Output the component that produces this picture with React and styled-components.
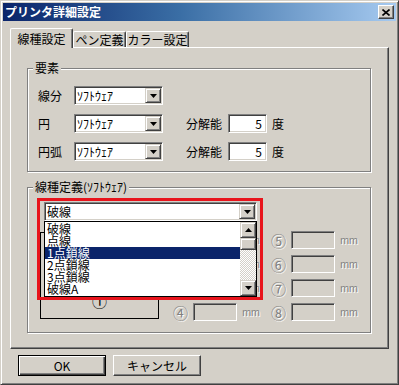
import React from 'react'
import styled, { createGlobalStyle, css } from 'styled-components'

const GlobalStyle = createGlobalStyle`
  html, body {
    margin: 0;
    padding: 0;
    background: #d4d0c8;
  }
  body {
    font-family: "Noto Sans CJK JP", "Noto Sans", sans-serif;
    font-size: 12px;
    color: #000;
  }
`

const raised = css`
  border: 1px solid;
  border-color: #fff #404040 #404040 #fff;
  box-shadow: inset -1px -1px 0 #808080;
`

const sunken = css`
  border: 1px solid;
  border-color: #808080 #fff #fff #808080;
  box-shadow: inset 1px 1px 0 #404040, inset -1px -1px 0 #d4d0c8;
`

const Window = styled.div`
  box-sizing: border-box;
  width: 399px;
  height: 385px;
  background: #d4d0c8;
  border: 1px solid;
  border-color: #d4d0c8 #404040 #404040 #d4d0c8;
  box-shadow: inset 1px 1px 0 #fff, inset -1px -1px 0 #808080;
  padding: 2px;
  display: flex;
  flex-direction: column;
`

const TitleBar = styled.div`
  height: 18px;
  display: flex;
  align-items: center;
  justify-content: space-between;
  padding: 0 2px 0 2px;
  background: linear-gradient(90deg, #0a246a 0%, #3a6ea5 45%, #a6caf0 100%);
  color: #fff;
  font-weight: bold;
  font-size: 12px;
  line-height: 1;
`

const CloseButton = styled.div`
  box-sizing: border-box;
  width: 16px;
  height: 14px;
  background: #d4d0c8;
  ${raised}
  display: flex;
  align-items: center;
  justify-content: center;
`

const Body = styled.div`
  padding: 7px 7px 0 7px;
  display: flex;
  flex-direction: column;
`

const TabStrip = styled.div`
  display: flex;
  align-items: flex-end;
  height: 20px;
  margin-bottom: -1px;
  position: relative;
  z-index: 1;
`

const Tab = styled.div`
  box-sizing: border-box;
  width: ${p => p.$w}px;
  height: ${p => (p.$active ? 20 : 16)}px;
  margin-bottom: ${p => (p.$active ? 0 : 1)}px;
  background: #d4d0c8;
  border-top: 1px solid #fff;
  border-left: 1px solid #fff;
  border-right: 1px solid #404040;
  box-shadow: inset -1px 0 0 #808080;
  border-radius: 2px 2px 0 0;
  display: flex;
  align-items: center;
  justify-content: center;
  line-height: 1;
  white-space: nowrap;
`

const Panel = styled.div`
  box-sizing: border-box;
  height: 302px;
  ${raised}
  padding: 20px 0 0 16px;
  display: flex;
  flex-direction: column;
`

const Group = styled.div`
  box-sizing: border-box;
  position: relative;
  width: 344px;
  height: ${p => p.$h}px;
  margin-top: ${p => p.$mt || 0}px;
  border: 1px solid #808080;
  box-shadow: inset 1px 1px 0 #fff, 1px 1px 0 #fff;
  padding: ${p => p.$pt}px 0 0 ${p => p.$pl}px;
  display: flex;
  flex-direction: column;
`

const Legend = styled.span`
  position: absolute;
  top: -8px;
  left: 5px;
  padding: 0 2px;
  line-height: 14px;
  background: #d4d0c8;
  white-space: nowrap;
`

const Rows = styled.div`
  display: flex;
  flex-direction: column;
  gap: 9px;
`

const Row = styled.div`
  display: flex;
  align-items: center;
  height: 19px;
`

const RowLabel = styled.span`
  width: 36px;
`

const Combo = styled.div`
  box-sizing: border-box;
  width: ${p => p.$w}px;
  height: 19px;
  margin-left: ${p => p.$ml || 0}px;
  padding: 1px;
  background: #fff;
  ${sunken}
  display: flex;
`

const ComboText = styled.span`
  flex: 1;
  padding-left: 1px;
  display: flex;
  align-items: center;
  white-space: nowrap;
  overflow: hidden;
  line-height: 1;
`

const ArrowButton = styled.span`
  box-sizing: border-box;
  width: 16px;
  height: ${p => p.$h || 15}px;
  flex: none;
  background: #d4d0c8;
  border: 1px solid;
  border-color: #d4d0c8 #404040 #404040 #d4d0c8;
  box-shadow: inset 1px 1px 0 #fff, inset -1px -1px 0 #808080;
  display: flex;
  align-items: center;
  justify-content: center;
`

const ResLabel = styled.span`
  margin-left: 23px;
  width: 42px;
`

const Edit = styled.div`
  box-sizing: border-box;
  width: 39px;
  height: 19px;
  background: #fff;
  ${sunken}
  display: flex;
  align-items: center;
  justify-content: flex-end;
  padding-right: 4px;
  line-height: 1;
`

const Unit = styled.span`
  margin-left: 5px;
`

const DefRow = styled.div`
  display: flex;
  align-items: flex-start;
  margin-top: 10px;
`

const Preview = styled.div`
  box-sizing: border-box;
  width: 119px;
  height: 87px;
  margin-top: 1px;
  border: 1px solid #000;
  display: flex;
  align-items: flex-end;
  justify-content: center;
  padding-bottom: 10px;
  font-size: 15px;
  line-height: 15px;
`

const FieldCol = styled.div`
  width: ${p => p.$w}px;
  margin-left: ${p => p.$ml || 0}px;
  display: flex;
  flex-direction: column;
  gap: 6px;
`

const FieldRow = styled.div`
  display: flex;
  align-items: center;
  height: 18px;
`

const Disabled = styled.span`
  color: #808080;
  text-shadow: 1px 1px 0 #fff;
  line-height: 1;
`

const Circled = styled(Disabled)`
  width: 14px;
  margin-left: -1px;
  margin-right: 6px;
  font-size: 15px;
`

const Field = styled.div`
  box-sizing: border-box;
  width: 44px;
  height: 18px;
  background: #d4d0c8;
  ${sunken}
`

const Mm = styled(Disabled)`
  margin-left: 5px;
  font-size: 10px;
  letter-spacing: -0.5px;
`

const RedFrame = styled.div`
  position: absolute;
  left: 9px;
  top: 10px;
  width: 226px;
  height: 102px;
  box-sizing: border-box;
  border: 3px solid #e8141c;
  pointer-events: none;
  z-index: 2;
`

const DropList = styled.div`
  position: absolute;
  left: 16px;
  top: 33px;
  width: 213px;
  height: 76px;
  box-sizing: border-box;
  border: 1px solid #000;
  background: #fff;
  display: flex;
  z-index: 3;
`

const Items = styled.div`
  flex: 1;
  padding-top: 1px;
`

const Item = styled.div`
  height: 12px;
  line-height: 12px;
  padding-left: 2px;
  white-space: nowrap;
  background: ${p => (p.$sel ? '#0a246a' : 'transparent')};
  color: ${p => (p.$sel ? '#fff' : '#000')};
`

const ScrollBar = styled.div`
  width: 16px;
  display: flex;
  flex-direction: column;
`

const Thumb = styled.div`
  box-sizing: border-box;
  height: 12px;
  background: #d4d0c8;
  border: 1px solid;
  border-color: #d4d0c8 #404040 #404040 #d4d0c8;
  box-shadow: inset 1px 1px 0 #fff, inset -1px -1px 0 #808080;
`

const Track = styled.div`
  flex: 1;
  background: repeating-conic-gradient(#d4d0c8 0 25%, #fff 0 50%) 0 0 / 2px 2px;
`

const Footer = styled.div`
  display: flex;
  gap: 7px;
  margin-top: 6px;
  padding-left: 8px;
`

const Button = styled.div`
  box-sizing: border-box;
  width: 88px;
  height: 21px;
  background: #d4d0c8;
  display: flex;
  align-items: center;
  justify-content: center;
  line-height: 1;
  ${p =>
    p.$default
      ? css`
          border: 1px solid #000;
          box-shadow: inset 1px 1px 0 #fff, inset -1px -1px 0 #404040,
            inset -2px -2px 0 #808080;
        `
      : raised}
`

const Tri = ({ up }) => (
  <svg width="7" height="4" viewBox="0 0 7 4">
    <polygon points={up ? '3.5,0 7,4 0,4' : '0,0 7,0 3.5,4'} fill="#000" />
  </svg>
)

const CloseGlyph = () => (
  <svg width="8" height="7" viewBox="0 0 8 7">
    <path d="M0.5 0.5 L7.5 6.5 M7.5 0.5 L0.5 6.5" stroke="#000" strokeWidth="1.6" />
  </svg>
)

const SoftCombo = () => (
  <Combo $w={89}>
    <ComboText>ｿﾌﾄｳｪｱ</ComboText>
    <ArrowButton>
      <Tri />
    </ArrowButton>
  </Combo>
)

const lineTypes = ['破線', '点線', '1点鎖線', '2点鎖線', '3点鎖線', '破線A']

const FieldItem = ({ n }) => (
  <FieldRow>
    <Circled>{n}</Circled>
    <Field />
    <Mm>mm</Mm>
  </FieldRow>
)

export default function App() {
  return (
    <>
      <GlobalStyle />
      <Window>
        <TitleBar>
          <span>プリンタ詳細設定</span>
          <CloseButton>
            <CloseGlyph />
          </CloseButton>
        </TitleBar>
        <Body>
          <TabStrip>
            <Tab $w={63} $active>線種設定</Tab>
            <Tab $w={53}>ペン定義</Tab>
            <Tab $w={63}>カラー設定</Tab>
          </TabStrip>
          <Panel>
            <Group $h={104} $pt={17} $pl={10}>
              <Legend>要素</Legend>
              <Rows>
                <Row>
                  <RowLabel>線分</RowLabel>
                  <SoftCombo />
                </Row>
                <Row>
                  <RowLabel>円</RowLabel>
                  <SoftCombo />
                  <ResLabel>分解能</ResLabel>
                  <Edit>5</Edit>
                  <Unit>度</Unit>
                </Row>
                <Row>
                  <RowLabel>円弧</RowLabel>
                  <SoftCombo />
                  <ResLabel>分解能</ResLabel>
                  <Edit>5</Edit>
                  <Unit>度</Unit>
                </Row>
              </Rows>
            </Group>
            <Group $h={146} $mt={15} $pt={14} $pl={12}>
              <Legend>線種定義(ｿﾌﾄｳｪｱ)</Legend>
              <Combo $w={213} $ml={4}>
                <ComboText>破線</ComboText>
                <ArrowButton>
                  <Tri />
                </ArrowButton>
              </Combo>
              <DefRow>
                <Preview>①</Preview>
                <FieldCol $w={98} $ml={15}>
                  <FieldItem n="①" />
                  <FieldItem n="②" />
                  <FieldItem n="③" />
                  <FieldItem n="④" />
                </FieldCol>
                <FieldCol $w={98}>
                  <FieldItem n="⑤" />
                  <FieldItem n="⑥" />
                  <FieldItem n="⑦" />
                  <FieldItem n="⑧" />
                </FieldCol>
              </DefRow>
              <RedFrame />
              <DropList>
                <Items>
                  {lineTypes.map((t, i) => (
                    <Item key={t} $sel={i === 2}>
                      {t}
                    </Item>
                  ))}
                </Items>
                <ScrollBar>
                  <ArrowButton $h={16}>
                    <Tri up />
                  </ArrowButton>
                  <Thumb />
                  <Track />
                  <ArrowButton $h={16}>
                    <Tri />
                  </ArrowButton>
                </ScrollBar>
              </DropList>
            </Group>
          </Panel>
          <Footer>
            <Button $default>OK</Button>
            <Button>キャンセル</Button>
          </Footer>
        </Body>
      </Window>
    </>
  )
}
